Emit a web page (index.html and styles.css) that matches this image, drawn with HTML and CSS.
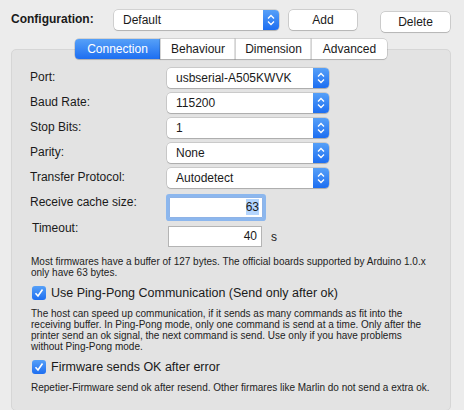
FILE: index.html
```html
<!DOCTYPE html>
<html lang="en">
<head>
    <meta charset="UTF-8">
    <title>Printer Settings</title>
    <link rel="stylesheet" href="styles.css">
</head>
<body>
<div class="toolbar">
    <span class="config-label">Configuration:</span>
    <div class="combo config-combo">
        <span class="combo-text">Default</span>
        <span class="stepper"><svg width="8" height="12" viewBox="0 0 8 12"><path d="M1 4.5 L4 1.5 L7 4.5 M1 7.5 L4 10.5 L7 7.5" fill="none" stroke="#fff" stroke-width="1.3"/></svg></span>
    </div>
    <button class="push-button add-button">Add</button>
    <button class="push-button delete-button">Delete</button>
</div>

<div class="panel">
    <div class="tabs">
        <span class="tab active">Connection</span>
        <span class="tab">Behaviour</span>
        <span class="tab">Dimension</span>
        <span class="tab">Advanced</span>
    </div>

    <div class="form">
        <label class="form-label">Port:</label>
        <div class="combo">
            <span class="combo-text">usbserial-A505KWVK</span>
            <span class="stepper"><svg width="8" height="12" viewBox="0 0 8 12"><path d="M1 4.5 L4 1.5 L7 4.5 M1 7.5 L4 10.5 L7 7.5" fill="none" stroke="#fff" stroke-width="1.3"/></svg></span>
        </div>

        <label class="form-label">Baud Rate:</label>
        <div class="combo">
            <span class="combo-text">115200</span>
            <span class="stepper"><svg width="8" height="12" viewBox="0 0 8 12"><path d="M1 4.5 L4 1.5 L7 4.5 M1 7.5 L4 10.5 L7 7.5" fill="none" stroke="#fff" stroke-width="1.3"/></svg></span>
        </div>

        <label class="form-label">Stop Bits:</label>
        <div class="combo">
            <span class="combo-text">1</span>
            <span class="stepper"><svg width="8" height="12" viewBox="0 0 8 12"><path d="M1 4.5 L4 1.5 L7 4.5 M1 7.5 L4 10.5 L7 7.5" fill="none" stroke="#fff" stroke-width="1.3"/></svg></span>
        </div>

        <label class="form-label">Parity:</label>
        <div class="combo">
            <span class="combo-text">None</span>
            <span class="stepper"><svg width="8" height="12" viewBox="0 0 8 12"><path d="M1 4.5 L4 1.5 L7 4.5 M1 7.5 L4 10.5 L7 7.5" fill="none" stroke="#fff" stroke-width="1.3"/></svg></span>
        </div>

        <label class="form-label">Transfer Protocol:</label>
        <div class="combo">
            <span class="combo-text">Autodetect</span>
            <span class="stepper"><svg width="8" height="12" viewBox="0 0 8 12"><path d="M1 4.5 L4 1.5 L7 4.5 M1 7.5 L4 10.5 L7 7.5" fill="none" stroke="#fff" stroke-width="1.3"/></svg></span>
        </div>

        <label class="form-label">Receive cache size:</label>
        <div class="field-row cache-row">
            <div class="text-field focused"><span class="selected">63</span></div>
        </div>

        <label class="form-label timeout-label">Timeout:</label>
        <div class="field-row timeout-row">
            <div class="text-field">40</div>
            <span class="unit">s</span>
        </div>
    </div>

    <p class="help">Most firmwares have a buffer of 127 bytes. The official boards supported by Arduino 1.0.x only have 63 bytes.</p>

    <div class="check">
        <span class="checkbox"><svg width="10" height="10" viewBox="0 0 10 10"><path d="M1.5 5.2 L4 8 L8.5 1.5" fill="none" stroke="#fff" stroke-width="1.6"/></svg></span>
        <span>Use Ping-Pong Communication (Send only after ok)</span>
    </div>

    <p class="help">The host can speed up communication, if it sends as many commands as fit into the receiving buffer. In Ping-Pong mode, only one command is send at a time. Only after the printer send an ok signal, the next command is send. Use only if you have problems without Ping-Pong mode.</p>

    <div class="check">
        <span class="checkbox"><svg width="10" height="10" viewBox="0 0 10 10"><path d="M1.5 5.2 L4 8 L8.5 1.5" fill="none" stroke="#fff" stroke-width="1.6"/></svg></span>
        <span>Firmware sends OK after error</span>
    </div>

    <p class="help">Repetier-Firmware send ok after resend. Other firmares like Marlin do not send a extra ok.</p>
</div>
</body>
</html>
```

FILE: styles.css
```css
body {
    margin: 0;
    background-color: #ececec;
    font-family: "Liberation Sans", Arial, sans-serif;
    font-size: 12px;
    color: #1a1a1a;
    overflow: hidden;
}

/* top row */
.toolbar {
    display: flex;
    align-items: center;
    padding: 9px 0 0 11px;
    height: 22px;
}
.config-label {
    width: 103px;
    font-weight: bold;
    font-size: 12px;
    margin-top: -3px;
}
.config-combo {
    width: 165px;
    height: 21px;
}
.push-button {
    height: 20px;
    background: #fff;
    border: none;
    border-radius: 4px;
    box-shadow: 0 0 0 0.5px rgba(0, 0, 0, 0.25), 0 1px 1px rgba(0, 0, 0, 0.12);
    font-family: inherit;
    font-size: 12px;
    color: #1a1a1a;
    padding: 0;
}
.add-button {
    width: 68px;
    margin-left: 10px;
}
.delete-button {
    width: 69px;
    margin-left: 24px;
    margin-top: 3px;
}

/* popup buttons */
.combo {
    display: flex;
    align-items: center;
    height: 20px;
    background: #fff;
    border-radius: 4px;
    box-shadow: 0 0 0 0.5px rgba(0, 0, 0, 0.22), 0 1px 1px rgba(0, 0, 0, 0.15);
    overflow: hidden;
}
.combo-text {
    flex: 1;
    padding-left: 9px;
    white-space: nowrap;
}
.stepper {
    width: 16px;
    align-self: stretch;
    display: flex;
    align-items: center;
    justify-content: center;
    background: linear-gradient(#56a0f8, #1d6ef1);
}

/* group box */
.panel {
    margin: 18px 0 0 11px;
    width: 438px;
    height: 360px;
    background: #e3e3e3;
    border: 1px solid #d6d6d6;
    border-radius: 5px;
}
.tabs {
    display: flex;
    justify-content: center;
    margin-top: -11px;
}
.tab {
    height: 20px;
    line-height: 20px;
    background: #fff;
    text-align: center;
    font-size: 12px;
    box-shadow: 0 0 0 0.5px rgba(0, 0, 0, 0.22), 0 1px 1px rgba(0, 0, 0, 0.12);
    border-left: 1px solid #d4d4d4;
}
.tab:nth-child(1) { width: 85px; border-radius: 4px 0 0 4px; border-left: none; }
.tab:nth-child(2) { width: 74px; }
.tab:nth-child(3) { width: 75px; }
.tab:nth-child(4) { width: 75px; border-radius: 0 4px 4px 0; }
.tab.active {
    background: linear-gradient(#56a0f8, #1d6ef1);
    color: #fff;
}

/* settings grid */
.form {
    display: grid;
    grid-template-columns: 137px 162px;
    grid-auto-rows: 20px;
    row-gap: 5px;
    margin: 9px 0 0 18px;
    align-items: center;
}
.form-label {
    margin-top: -3px;
}
.timeout-label {
    padding-left: 2px;
    margin-top: 0;
}
.field-row {
    display: flex;
    align-items: center;
}
.cache-row {
    margin-top: 8px;
    padding-left: 2px;
}
.timeout-row {
    margin-top: 17px;
    padding-left: 1px;
}
.text-field {
    width: 88px;
    height: 19px;
    line-height: 19px;
    background: #fff;
    border: 1px solid #b4b4b4;
    text-align: right;
    padding-right: 4px;
}
.text-field.focused {
    width: 89px;
    border-color: #8fb3e6;
    box-shadow: 0 0 0 3px #8cb7ee;
    border-radius: 1px;
    padding-right: 3px;
}
.selected {
    background: #b4d5fe;
    padding: 1px 0;
}
.unit {
    margin-left: 9px;
}

.help {
    margin: 0 0 0 19px;
    font-size: 10px;
    line-height: 11px;
    width: 401px;
    color: #222;
}
.form + .help {
    margin-top: 18px;
}
.check {
    display: flex;
    align-items: center;
    margin: 8px 0 8px 20px;
    font-size: 12.5px;
}
.checkbox {
    width: 14px;
    height: 14px;
    border-radius: 3px;
    background: linear-gradient(#56a0f8, #1d6ef1);
    display: flex;
    align-items: center;
    justify-content: center;
    margin-right: 5px;
}
```
